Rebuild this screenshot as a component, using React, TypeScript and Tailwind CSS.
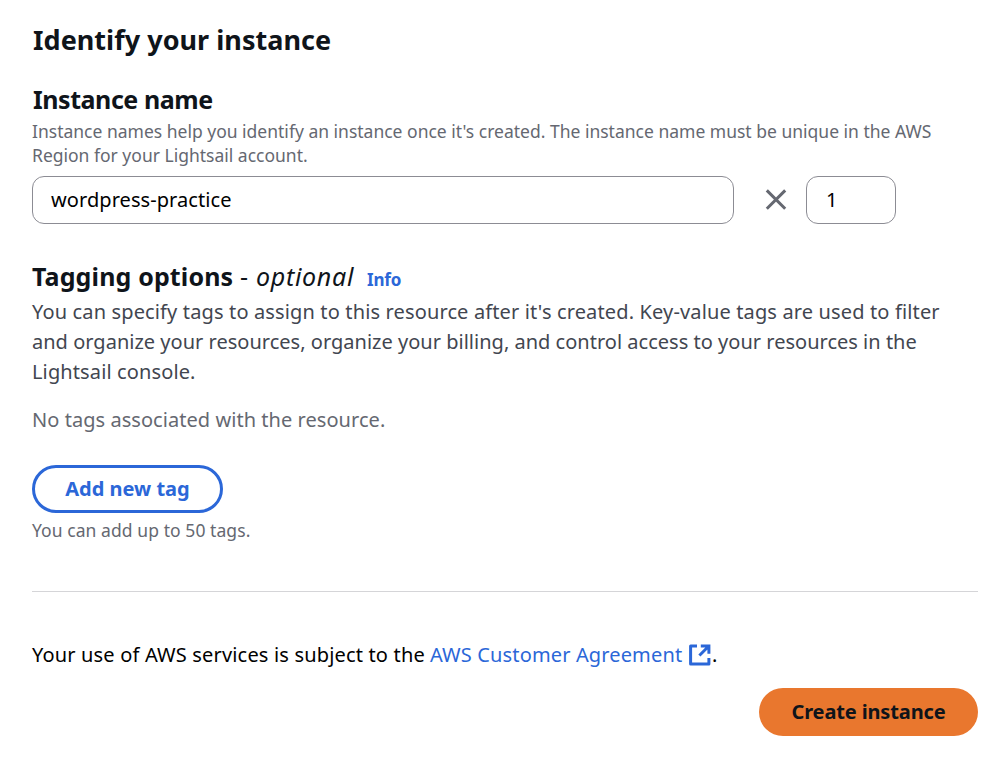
const font = "font-['Noto_Sans','Open_Sans',sans-serif]";

function CloseIcon() {
  return (
    <svg width="24" height="24" viewBox="0 0 24 24" fill="none" stroke="#656871" strokeWidth="3">
      <path d="M2.8 2.4 21.2 20.8M21.2 2.4 2.8 20.8" />
    </svg>
  );
}

function ExternalIcon() {
  return (
    <svg width="24" height="24" viewBox="0 0 24 24" fill="none" stroke="#2b67d8" strokeWidth="3">
      <path d="M9 3H2.6V21H20.9V15" strokeLinejoin="round" />
      <path d="M12.8 3H20.9V10.8M20.9 3 11.4 12.5" />
    </svg>
  );
}

export default function App() {
  return (
    <main className={`${font} h-[784px] w-[996px] overflow-hidden bg-white pt-[22px] pr-[18px] pl-8 whitespace-nowrap text-[#0f141a]`}>
      <h1 className="h-9 pl-px text-[27px] leading-9 font-bold tracking-[0.03px]">Identify your instance</h1>

      <section className="mt-[23px]">
        <h2 className="h-[37px] pl-px text-[25px] leading-[36px] font-bold tracking-[-0.45px]">Instance name</h2>
        <p className="mt-px text-[17.5px] leading-6 text-[#656871]">
          <span className="block">Instance names help you identify an instance once it's created. The instance name must be unique in the AWS</span>
          <span className="block">Region for your Lightsail account.</span>
        </p>
        <div className="mt-[9px] flex items-center">
          <div className="flex h-12 w-[702px] items-center rounded-xl border border-[#8c8c94] pl-[18px] text-[20px] tracking-[0.07px] text-black">
            wordpress-practice
          </div>
          <div className="mr-[18px] ml-[30px]"><CloseIcon /></div>
          <div className="flex h-12 w-[90px] items-center rounded-xl border border-[#8c8c94] pl-[19px] text-[20px] text-black">
            1
          </div>
        </div>
      </section>

      <section className="mt-[34px]">
        <div className="flex h-[37px] items-baseline leading-9">
          <h2 className="w-[208px] text-[25px] font-bold tracking-[0.14px]">Tagging options</h2>
          <span className="w-[127px] text-[25px] tracking-[0.7px]">- <i>optional</i></span>
          <a className="text-[17px] font-bold tracking-[-0.2px] text-[#2b67d8]">Info</a>
        </div>
        <p className="mt-0.5 text-[20px] leading-[30px] text-[#424650]">
          <span className="block tracking-[0.14px]">You can specify tags to assign to this resource after it's created. Key-value tags are used to filter</span>
          <span className="block tracking-[0.015px]">and organize your resources, organize your billing, and control access to your resources in the</span>
          <span className="block tracking-[0.12px]">Lightsail console.</span>
        </p>
        <p className="mt-[18px] text-[20px] leading-[30px] tracking-[0.05px] text-[#656871]">No tags associated with the resource.</p>
        <button className="mt-[30px] flex h-12 w-[191px] items-center justify-center rounded-full border-[3px] border-[#2b67d8] text-[20px] font-bold text-[#2b67d8]">
          Add new tag
        </button>
        <p className="mt-[5px] text-[17.5px] leading-6 tracking-[0.07px] text-[#656871]">You can add up to 50 tags.</p>
      </section>

      <hr className="mt-[49px] border-t border-[#d5d5d8]" />

      <footer className="mt-12">
        <div className="flex h-[30px] items-center text-[20px] leading-[30px] text-black">
          <span className="w-[398px] tracking-[0.17px]">Your use of AWS services is subject to the</span>
          <a className="w-[258px] tracking-[0.14px] text-[#2b67d8]">AWS Customer Agreement</a>
          <ExternalIcon />
          <span>.</span>
        </div>
        <div className="mt-[18px] flex justify-end">
          <button className="h-12 w-[219px] rounded-full bg-[#e9772e] text-[20px] font-bold tracking-[-0.14px] text-[#0f141a]">Create instance</button>
        </div>
      </footer>
    </main>
  );
}
